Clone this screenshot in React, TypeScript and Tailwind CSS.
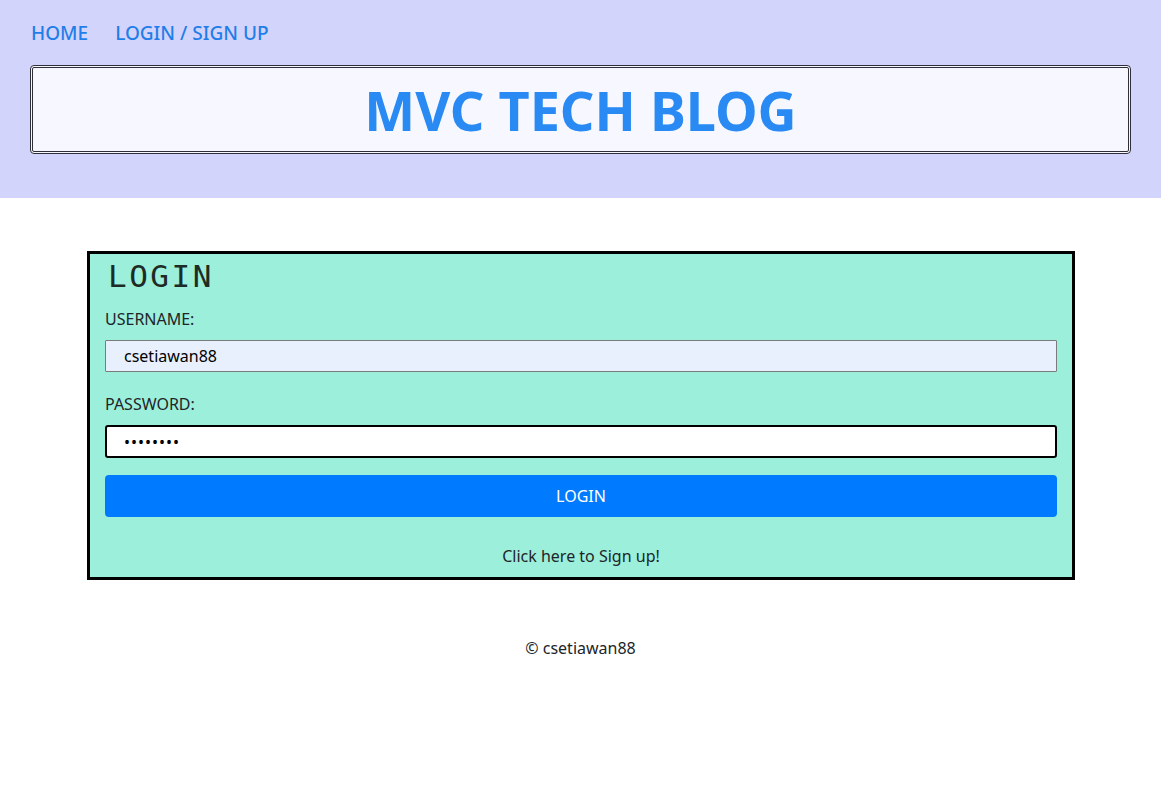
import React from "react";

const App = () => {
    return (
        <div className="min-h-[785px] bg-white text-[#212529]" style={{ fontFamily: '"Noto Sans", "Open Sans", sans-serif' }}>
            {/* ヘッダー */}
            <header className="bg-[#d3d4fb] px-[30px] pt-[20px] h-[198px]">
                <nav className="flex gap-[27px] text-[19px] font-medium text-[#1f7ee9] leading-[26px] pl-[1px]">
                    <a>HOME</a>
                    <a>LOGIN / SIGN UP</a>
                </nav>
                <div className="mt-[19px] h-[89px] rounded-[4px] border-[3px] border-double border-[#2f2f3a] bg-[#f7f8ff] flex items-center justify-center">
                    <h1 className="text-[54px] font-bold text-[#2a8af3] leading-none">MVC TECH BLOG</h1>
                </div>
            </header>

            {/* メインコンテンツ */}
            <main className="pt-[53px]">
                <div className="mx-[87px] w-[988px] border-[3px] border-black bg-[#9cefda] px-[15px] pb-[10px]">
                    <h2 className="text-[31px] leading-[40px] tracking-[2.5px] pl-[3px] text-[#1d2b24] mt-[2px]" style={{ fontFamily: '"DejaVu Sans Mono", monospace' }}>LOGIN</h2>
                    <label className="block mt-[12px] text-[16px] leading-[22px]">USERNAME:</label>
                    <div className="mt-[10px] h-[32px] border border-[#7b7b7b] bg-[#e8f0fe] pl-[18px] flex items-center text-[16px] text-black rounded-[1px]">csetiawan88</div>
                    <label className="block mt-[21px] text-[16px] leading-[22px]">PASSWORD:</label>
                    <div className="mt-[10px] h-[33px] border-2 border-black bg-white pl-[17px] flex items-center text-[16px] text-black rounded-[3px] tracking-[1px]">••••••••</div>
                    <button className="mt-[17px] w-full h-[42px] rounded-[4px] bg-[#007bff] text-white text-[16px]">LOGIN</button>
                    <p className="mt-[28px] text-center text-[16px] leading-[22px]">Click here to Sign up!</p>
                </div>
            </main>

            {/* フッター */}
            <footer className="mt-[57px] text-center text-[16px] leading-[22px]">© csetiawan88</footer>
        </div>
    );
};

export default App;
